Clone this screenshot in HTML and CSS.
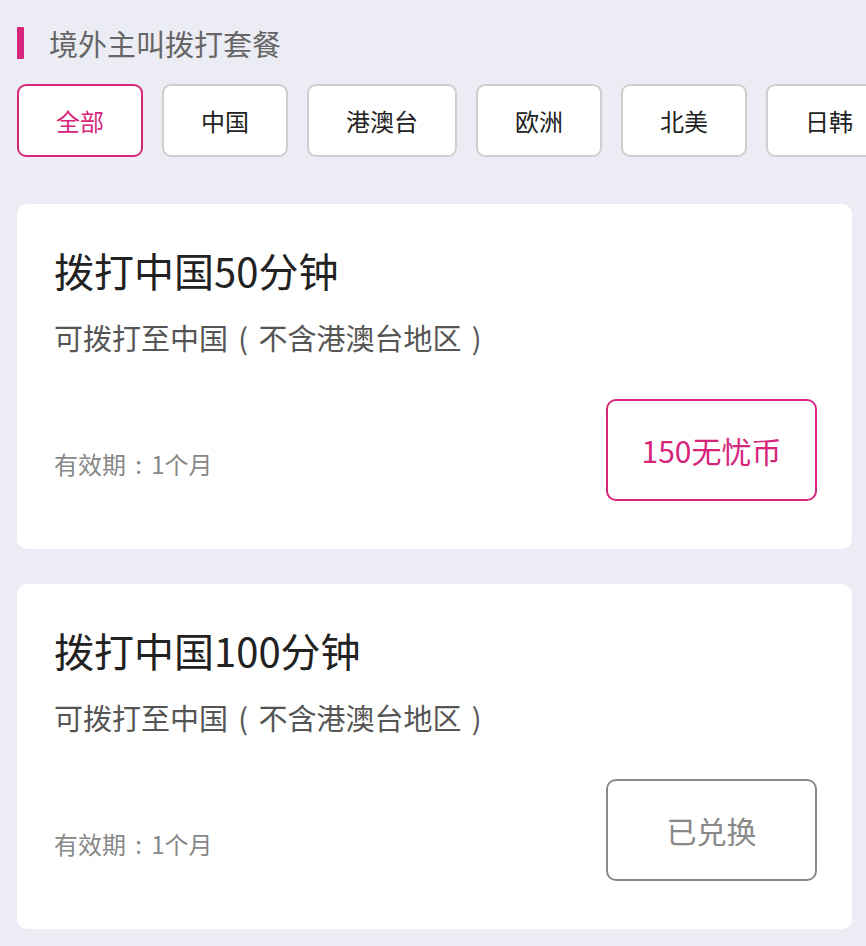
FILE: index.html
```html
<!DOCTYPE html>
<html lang="zh-CN">
<head>
<meta charset="utf-8">
<title>境外主叫拨打套餐</title>
<link rel="stylesheet" href="styles.css">
</head>
<body>
<div class="page">
  <div class="section-title">
    <span class="bar"></span>
    <h1>境外主叫拨打套餐</h1>
  </div>
  <div class="tabs">
    <div class="tab active">全部</div>
    <div class="tab">中国</div>
    <div class="tab">港澳台</div>
    <div class="tab">欧洲</div>
    <div class="tab">北美</div>
    <div class="tab">日韩</div>
  </div>
  <div class="cards">
    <div class="card">
      <h2 class="card-title">拨打中国50分钟</h2>
      <p class="card-desc">可拨打至中国<span class="punct">(</span>不含港澳台地区<span class="punct">)</span></p>
      <div class="card-foot">
        <span class="validity">有效期<span class="punct">:</span>1个月</span>
        <button class="btn btn-buy">150无忧币</button>
      </div>
    </div>
    <div class="card">
      <h2 class="card-title">拨打中国100分钟</h2>
      <p class="card-desc">可拨打至中国<span class="punct">(</span>不含港澳台地区<span class="punct">)</span></p>
      <div class="card-foot">
        <span class="validity">有效期<span class="punct">:</span>1个月</span>
        <button class="btn btn-done">已兑换</button>
      </div>
    </div>
  </div>
</div>
</body>
</html>
```
FILE: styles.css
```css
html, body {
  margin: 0;
  padding: 0;
  background: #ececf4;
}
body {
  font-family: "Noto Sans CJK SC", "Noto Sans", sans-serif;
  width: 866px;
  height: 946px;
  overflow: hidden;
}
.page {
  padding-top: 27px;
}
.section-title {
  display: flex;
  align-items: center;
  padding-left: 17px;
  height: 32px;
}
.bar {
  width: 7px;
  height: 32px;
  background: #d5267b;
  border-radius: 1px;
}
.section-title h1 {
  margin: 0 0 0 25px;
  font-size: 29px;
  font-weight: 400;
  color: #666;
  line-height: 32px;
}
.tabs {
  display: flex;
  gap: 19px;
  padding-left: 17px;
  margin-top: 25px;
  overflow: hidden;
  white-space: nowrap;
}
.tab {
  flex: none;
  height: 73px;
  box-sizing: border-box;
  padding: 0 37px;
  display: flex;
  align-items: center;
  justify-content: center;
  border: 2px solid #cfcfcf;
  border-radius: 9px;
  background: #fff;
  font-size: 24px;
  color: #222;
}
.tab.active {
  border-color: #d5267b;
  color: #d5267b;
}
.cards {
  display: flex;
  flex-direction: column;
  gap: 35px;
  margin: 47px 14px 0 17px;
}
.card {
  background: #fff;
  border-radius: 10px;
  height: 345px;
  box-sizing: border-box;
  padding: 42px 35px 0 37px;
}
.card-title {
  margin: 0;
  font-size: 40px;
  font-weight: 400;
  line-height: 48px;
  color: #222;
}
.card-desc {
  margin: 26px 0 0;
  font-size: 29px;
  line-height: 35px;
  color: #555;
}
.punct {
  display: inline-block;
  width: 1.05em;
  text-align: center;
}
.card-foot {
  display: flex;
  justify-content: space-between;
  align-items: flex-end;
  margin-top: 44px;
}
.validity {
  font-size: 24px;
  line-height: 30px;
  color: #888;
  margin-bottom: 22px;
}
.btn {
  width: 211px;
  height: 102px;
  box-sizing: border-box;
  border-radius: 10px;
  background: #fff;
  font-family: inherit;
  font-size: 30px;
  padding: 0;
}
.btn-buy {
  border: 2px solid #d5267b;
  color: #d5267b;
}
.btn-done {
  border: 2px solid #8a8a8a;
  color: #888;
}
```
